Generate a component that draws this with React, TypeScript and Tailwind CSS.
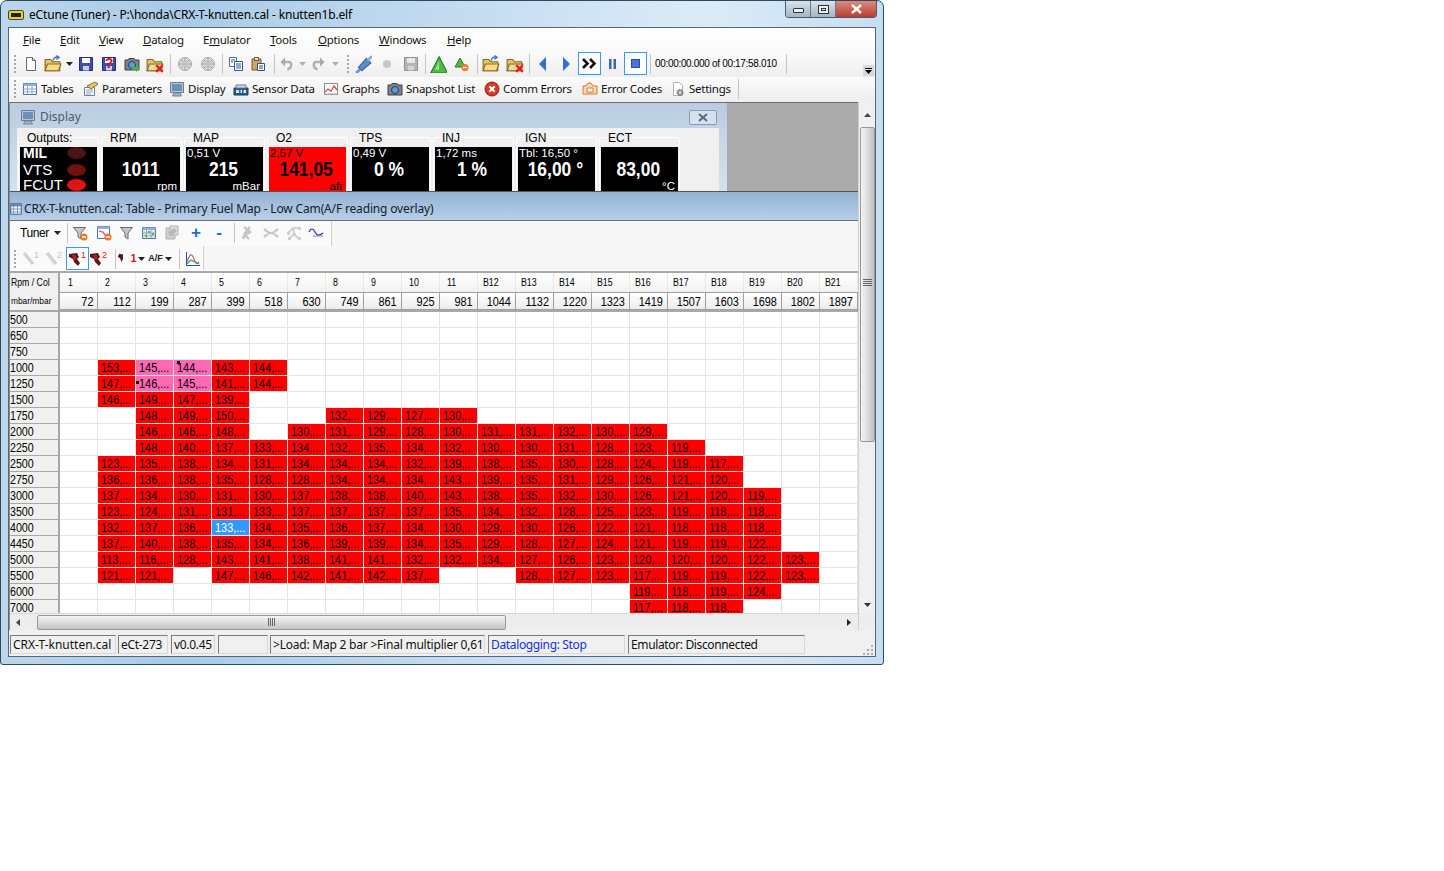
import type { ReactNode } from "react"

const ui = "font-['Noto_Sans',sans-serif]"
const ar = "font-['Liberation_Sans',Arial,sans-serif]"

// Icons are small hand drawn 16x16 svgs
function I({ children, s = 16 }: { children: ReactNode; s?: number }) {
  return (
    <svg width={s} height={s} viewBox="0 0 16 16" className="shrink-0">
      {children}
    </svg>
  )
}

const Doc = () => (
  <I>
    <path d="M3.500 1.500h6l3 3v10h-9z" fill="#fff" stroke="#5a6a8a" />
    <path d="M9.500 1.500v3h3" fill="#dfe6f2" stroke="#5a6a8a" />
  </I>
)
const Folder = ({ x }: { x?: boolean }) => (
  <I s={18}>
    <path d="M1 4h5l1.500 2H14v8H1z" fill="#e6c56a" stroke="#8a6a20" />
    <path d="M3 8h12l-2 6H1z" fill={x ? "#e8d9a0" : "#f7dc86"} stroke="#8a6a20" />
    {x ? (
      <path d="M9 9l6 6M15 9l-6 6" stroke="#e3231b" strokeWidth="2" />
    ) : (
      <path d="M8 5c1-3 3-3.500 5-3M11 .5l2.500 1.500L11 4" fill="none" stroke="#3d78c8" strokeWidth="1.200" />
    )}
  </I>
)
const Floppy = ({ gray, q }: { gray?: boolean; q?: boolean }) => (
  <I>
    <path d="M1.500 1.500h13v13h-13z" fill={gray ? "#b5b5b5" : "#3f4fa6"} stroke={gray ? "#909090" : "#26307a"} />
    <path d="M4 2h8v5H4z" fill={gray ? "#e8e8e8" : "#fff"} />
    <path d="M5 10h6v4.500H5z" fill={gray ? "#d5d5d5" : "#c9cde8"} />
    {q && (
      <text x="8" y="12" textAnchor="middle" fontSize="14" fontWeight="700" fill="#e01010" fontFamily="Liberation Sans">
        ?
      </text>
    )}
  </I>
)
const Camera = ({ go }: { go?: boolean }) => (
  <I>
    <path d="M1 4h3l1-1.500h5L11 4h4v10H1z" fill="#7d8288" stroke="#3c4046" />
    <circle cx="8" cy="9" r="3.500" fill="#5b9bd8" stroke="#2a3a50" />
    {go && <path d="M8 11h4V9l4 3.500L12 16v-2H8z" fill="#52b043" />}
  </I>
)
const Chip = () => (
  <I>
    <circle cx="8" cy="8" r="6.500" fill="#d8d8d8" stroke="#a8a8a8" />
    <path d="M8 2v12M2 8h12M4 4l8 8M12 4l-8 8" stroke="#a0a0a0" />
    <circle cx="8" cy="8" r="2.500" fill="#c4c4c4" />
  </I>
)
const Copy = () => (
  <I>
    <path d="M1.500 1.500h7v9h-7z" fill="#fff" stroke="#4a6fb0" />
    <path d="M6.500 5.500h8v9h-8z" fill="#fff" stroke="#2f56a0" />
    <path d="M8 8h5M8 10h5M8 12h5M3 4h4M3 6h2" stroke="#2f56a0" />
  </I>
)
const Paste = () => (
  <I>
    <path d="M2 3h9v11H2z" fill="#c8a868" stroke="#6e5a30" />
    <path d="M4.500 1.500h4v3h-4z" fill="#ece0b8" stroke="#6e5a30" />
    <path d="M7.500 7.500h7v7h-7z" fill="#fff" stroke="#33508a" />
    <path d="M9 10h4M9 12h4" stroke="#33508a" />
  </I>
)
const Curl = ({ flip }: { flip?: boolean }) => (
  <I>
    <g transform={flip ? "matrix(-1 0 0 1 16 0)" : undefined}>
      <path d="M4 6h6c3 0 3.500 6-1.500 7.500" fill="none" stroke="#b0b0b0" strokeWidth="2.400" />
      <path d="M6 1.500v9L1.500 6z" fill="#a8a8a8" />
    </g>
  </I>
)
const Plug = () => (
  <I s={18}>
    <path d="M2 16l3-3" stroke="#6c93cf" strokeWidth="2.500" />
    <path d="M4 11l7-8 4 4-8 7z" fill="#5b8bd0" stroke="#3b62a4" />
    <path d="M12 5l4-4" stroke="#8fa8cf" strokeWidth="2.500" />
  </I>
)
const Tri = ({ minus }: { minus?: boolean }) =>
  minus ? (
    <I>
      <path d="M6 2l5 9H1z" fill="#4db848" stroke="#2a7a2a" />
      <circle cx="11" cy="11.500" r="3.500" fill="#e8772a" />
      <path d="M9 11.500h4" stroke="#fff" strokeWidth="1.400" />
    </I>
  ) : (
    <I s={18}>
      <path d="M9 1.500L16.500 16h-15z" fill="#52b848" stroke="#2a7a2a" />
      <path d="M9 5l-3.500 8H9z" fill="#9fe090" />
    </I>
  )
const Caret = ({ c = "#222" }: { c?: string }) => (
  <svg width="7" height="4" viewBox="0 0 7 4" className="shrink-0">
    <path d="M0 0h7L3.500 4z" fill={c} />
  </svg>
)
const Grid = ({ dots }: { dots?: boolean }) => (
  <I>
    <path d="M1.500 2.500h13v11h-13z" fill={dots ? "#e8f0d0" : "#fff"} stroke="#4a72b0" />
    <path d="M1.500 2.500h13v2.500h-13z" fill="#8db0e0" />
    <path d="M5.500 5v8.500M10 5v8.500M1.500 8h13M1.500 10.800h13" stroke="#8aa6d0" />
    {dots && <path d="M7 6h2v2H7zM11 8h2v2h-2zM4 10h2v2H4z" fill="#58b858" />}
  </I>
)
const Params = () => (
  <I>
    <path d="M1.500 6.500h10v8h-10z" fill="#fff" stroke="#6a7fa0" />
    <path d="M3 9h7M3 11h7M3 13h5" stroke="#8aa0c0" />
    <path d="M4 5l8-4 3 2-7 5z" fill="#e8c868" stroke="#8a7030" />
  </I>
)
const Monitor = () => (
  <I>
    <path d="M1.500 1.500h13v10h-13z" fill="#b8c6d8" stroke="#6a7a90" />
    <path d="M3 3h10v7H3z" fill="#6d8fb8" />
    <path d="M5 12h6l1.500 3h-9z" fill="#a8b2c0" stroke="#7a8696" />
  </I>
)
const Sensor = () => (
  <I>
    <path d="M1 7h14v7H1z" fill="#2c5c8c" stroke="#173a60" />
    <path d="M3 4h10v3H3z" fill="#cfdcea" stroke="#6a7a90" />
    <path d="M3 9h3v3H3zM7.500 9H9v3H7.500zM10.500 9H13v3h-2.500z" fill="#cfe8f0" />
  </I>
)
const Chart = () => (
  <I>
    <path d="M1.500 2.500h13v11h-13z" fill="#fff" stroke="#8a8a8a" />
    <path d="M2 11l3-3 3 2 3-5 3 4" fill="none" stroke="#e04a3a" strokeWidth="1.300" />
    <path d="M2 13h12" stroke="#b0b0b0" />
  </I>
)
const ErrX = () => (
  <I>
    <circle cx="8" cy="8" r="7" fill="#d63a22" stroke="#9a2414" />
    <path d="M5.300 5.300l5.400 5.400M10.700 5.300l-5.400 5.400" stroke="#fff" strokeWidth="2" />
  </I>
)
const Codes = () => (
  <I>
    <path d="M1 5h3l2-3h3l2 3h4v8H1z" fill="#f6d8b8" stroke="#d87a2a" />
    <path d="M5 7h6v4H5z" fill="#fff" stroke="#d87a2a" />
  </I>
)
const Settings = () => (
  <I>
    <path d="M3.500 1.500h6l3 3v10h-9z" fill="#fff" stroke="#a8b0b8" />
    <circle cx="10" cy="11.500" r="3" fill="#9a9a9a" stroke="#6a6a6a" strokeDasharray="1.500 1" />
    <circle cx="10" cy="11.500" r="1" fill="#fff" />
  </I>
)
const Funnel = ({ minus }: { minus?: boolean }) => (
  <I>
    <path d="M1.500 2.500h12l-4.500 5.500v6l-3-2v-4z" fill="#c8c8c8" stroke="#6a6a6a" />
    {minus && <circle cx="12" cy="12" r="3.500" fill="#e8772a" />}
    {minus && <path d="M10 12h4" stroke="#fff" strokeWidth="1.400" />}
  </I>
)
const TableMinus = () => (
  <I>
    <path d="M1.500 1.500h12v12h-12z" fill="#fff" stroke="#4a72b0" />
    <path d="M1.500 1.500h12V4h-12z" fill="#8db0e0" />
    <path d="M3 6l4 1 3 4" fill="none" stroke="#e8559a" strokeWidth="1.400" />
    <circle cx="12" cy="12" r="3.500" fill="#e8772a" />
    <path d="M10 12h4" stroke="#fff" strokeWidth="1.400" />
  </I>
)
const GrayDoc = () => (
  <I>
    <path d="M2 3h9v11H2z" fill="#d0d0d0" stroke="#b0b0b0" />
    <path d="M6 1h8v9H6z" fill="#dcdcdc" stroke="#b4b4b4" />
    <path d="M4 8l6-5 3 3-6 5z" fill="#b8b8b8" />
  </I>
)
const Nodes = ({ v }: { v: number }) => (
  <I>
    {v === 0 && <path d="M5 2l6 5-5 3 4 4M11 2L6 8l-2 6" stroke="#c4c4c4" strokeWidth="2.400" fill="none" />}
    {v === 1 && <path d="M1 4l5 4-5 4M15 4l-5 4 5 4M5 8h6" stroke="#c8c8c8" strokeWidth="2.400" fill="none" />}
    {v === 2 && <path d="M2 8l5-5 6 0M7 3l1 6 5 5M8 9l-5 5" stroke="#c8c8c8" strokeWidth="1.600" fill="none" />}
    {v === 2 && <path d="M6 2h3v3H6zM1 7h3v3H1zM7 8h3v3H7zM12 2h3v3h-3zM12 12h3v3h-3zM2 12h3v3H2z" fill="#cfcfcf" />}
  </I>
)
const Wave = () => (
  <I>
    <path d="M1 7c2-4 4-4 6 0s4 4 8 1" fill="none" stroke="#2030c0" strokeWidth="1.200" />
    <path d="M5 11h10" stroke="#888" />
  </I>
)
const Injector = ({ gray, n }: { gray?: boolean; n?: string }) => (
  <svg width="20" height="18" viewBox="0 0 20 18" className="shrink-0">
    {gray ? (
      <path d="M3 3l9 11" stroke="#d2d2d2" strokeWidth="3.500" />
    ) : (
      <>
        <path d="M1 4l8-1 2 4-2 2 3 4-2 3-4-4-1-3-4-2z" fill="#5a1818" />
        <path d="M4 5l4 0 0 4-2 1z" fill="#a82828" />
      </>
    )}
    {n && (
      <text x="13" y="8" fontSize="9" fill={gray ? "#c4c4c4" : "#e81010"} fontFamily="Liberation Sans">
        {n}
      </text>
    )}
  </svg>
)
const Grip = () => (
  <div className="flex flex-col gap-[2px] w-[2px] shrink-0">
    {[0, 1, 2, 3, 4].map((i) => (
      <div key={i} className="w-[2px] h-[2px] bg-[#a8a8a8]" />
    ))}
  </div>
)
const Sep = ({ w }: { w: number }) => (
  <div className="flex justify-center shrink-0" style={{ width: w }}>
    <div className="w-px h-[20px] bg-[#c4c4c4]" />
  </div>
)
function B({ w, boxed, children }: { w: number; boxed?: boolean; children?: ReactNode }) {
  return (
    <div
      className={`flex items-center justify-center shrink-0 h-[23px] ${boxed ? "border border-[#3399ff] bg-white" : ""}`}
      style={{ width: w }}
    >
      {children}
    </div>
  )
}

function MainToolbar() {
  return (
    <div className="flex items-center shrink-0 h-[25px] pl-[5px] pb-[2px] bg-linear-to-b from-[#fbfbfb] to-[#eeeeee]">
      <div className="w-[5px]"><Grip /></div>
      <B w={23}><Doc /></B>
      <B w={22}><Folder /></B>
      <B w={10}><Caret /></B>
      <B w={23}><Floppy /></B>
      <B w={23}><Floppy q /></B>
      <B w={23}><Camera go /></B>
      <B w={23}><Folder x /></B>
      <Sep w={8} />
      <B w={22}><Chip /></B>
      <B w={23}><Chip /></B>
      <Sep w={6} />
      <B w={21}><Copy /></B>
      <B w={24}><Paste /></B>
      <Sep w={8} />
      <B w={17}><Curl /></B>
      <B w={15}><Caret c="#b0b0b0" /></B>
      <B w={16}><Curl flip /></B>
      <B w={18}><Caret c="#b0b0b0" /></B>
      <div className="flex justify-center w-[8px]"><Grip /></div>
      <B w={22}><Plug /></B>
      <B w={25}><div className="w-[8px] h-[8px] rounded-full bg-[#c8c8c8]" /></B>
      <B w={23}><Floppy gray /></B>
      <Sep w={6} />
      <B w={20}><Tri /></B>
      <B w={28}><Tri minus /></B>
      <Sep w={2} />
      <B w={26}><Folder /></B>
      <B w={22}><Folder x /></B>
      <Sep w={6} />
      <B w={22}>
        <svg width="8" height="14" viewBox="0 0 8 14"><path d="M7 0v14L0 7z" fill="#2f6fd8" /></svg>
      </B>
      <B w={24}>
        <svg width="8" height="14" viewBox="0 0 8 14"><path d="M1 0v14l7-7z" fill="#2f6fd8" /></svg>
      </B>
      <B w={23} boxed>
        <svg width="15" height="11" viewBox="0 0 15 11">
          <path d="M1 1l4.500 4.500L1 10M8 1l4.500 4.500L8 10" fill="none" stroke="#111" strokeWidth="2.600" />
        </svg>
      </B>
      <B w={23}>
        <svg width="7" height="10" viewBox="0 0 7 10"><path d="M0 0h2.500v10H0zM4.500 0H7v10H4.500z" fill="#3a62c8" /></svg>
      </B>
      <B w={23} boxed>
        <div className="w-[9px] h-[9px] bg-[#4a72d8] border border-[#2a4aa0]" />
      </B>
      <Sep w={6} />
      <div className={`${ar} w-[130px] shrink-0 pl-[2px] text-[10px] tracking-[-0.32px] text-black`}>00:00:00.000 of 00:17:58.010</div>
      <Sep w={6} />
      <div className="flex-1" />
      <div className="self-end flex flex-col items-center gap-[1px] w-[11px] h-[11px] mr-[1px] -mb-[1px] bg-[#d8d8d8] pt-[3px]">
        <div className="w-[7px] h-px bg-black" />
        <Caret c="#000" />
      </div>
    </div>
  )
}

const navItems: [ReactNode, string, number][] = [
  [<Grid />, "Tables", 61],
  [<Params />, "Parameters", 86],
  [<Monitor />, "Display", 64],
  [<Sensor />, "Sensor Data", 90],
  [<Chart />, "Graphs", 64],
  [<Camera />, "Snapshot List", 97],
  [<ErrX />, "Comm Errors", 98],
  [<Codes />, "Error Codes", 88],
  [<Settings />, "Settings", 70],
]

function NavToolbar() {
  return (
    <div className={`${ui} flex items-center shrink-0 h-[25px] pl-[5px] pb-[2px] bg-linear-to-b from-[#fbfbfb] to-[#eeeeee]`}>
      <div className="w-[6px]"><Grip /></div>
      {navItems.map(([icon, label, w]) => (
        <div key={label} className="flex items-center shrink-0 gap-[3px] pl-[2px]" style={{ width: w }}>
          {icon}
          <span className="text-[11.500px] tracking-[-0.25px] leading-none text-[#111] whitespace-nowrap">{label}</span>
        </div>
      ))}
      <div className="w-px h-[20px] bg-[#c4c4c4]" />
    </div>
  )
}

function Gauge({ label, top, value, unit, red }: { label: string; top?: string; value: string; unit?: string; red?: boolean }) {
  return (
    <Group label={label}>
      <div className={`${ar} h-[50px] flex flex-col ${red ? "bg-[#ff0000] text-black" : "bg-black text-white"}`}>
        <div className="h-[11px] text-[11.500px] leading-[13px] pl-px whitespace-nowrap">{top}</div>
        <div className="h-[22px] text-center pr-[2px] text-[21px] leading-[22px] font-bold">
          <span className="inline-block scale-x-[0.83]">{value}</span>
        </div>
        <div className="h-[12px] text-right text-[11.500px] leading-[12px] pr-[3px]">{unit}</div>
      </div>
    </Group>
  )
}

function Group({ label, children }: { label: string; children: ReactNode }) {
  return (
    <div className="relative w-[81px] h-[64px] mr-[2px] shrink-0 mt-[9px] border border-white rounded-t-[3px] pt-[9px] px-px">
      <span className={`${ar} absolute left-[7px] -top-[7px] bg-[#f0f0f0] px-px text-[12px] leading-[14px] text-black`}>{label}</span>
      {children}
    </div>
  )
}

const Led = ({ c }: { c: string }) => (
  <svg width="19" height="12" viewBox="0 0 19 12" className="shrink-0">
    <ellipse cx="9.500" cy="6" rx="9.500" ry="6" fill={c} />
  </svg>
)

function DisplayPanel() {
  return (
    <div className="flex shrink-0 h-[89px] border-t border-[#6e6e6e] overflow-hidden">
      <div className="w-[717px] bg-linear-to-b from-[#b9cde0] to-[#d4e3f2] shrink-0">
        <div className="h-[25px] flex items-center pt-[3px] pl-[10px] pr-[10px]">
          <Monitor />
          <span className={`${ui} ml-[4px] text-[12px] text-[#4a5a68]`}>Display</span>
          <div className="ml-auto w-[28px] h-[15px] border border-[#8a9ab0] rounded-[2px] bg-[#d6e1ee] flex items-center justify-center">
            <svg width="12" height="9" viewBox="0 0 12 9">
              <path d="M2 1l8 7M10 1L2 8" stroke="#5a6a7a" strokeWidth="2" />
            </svg>
          </div>
        </div>
        <div className="ml-[7px] w-[702px] h-[64px] bg-[#f0f0f0] flex pl-px overflow-hidden">
          <Group label="Outputs:">
            <div className={`${ar} h-[50px] bg-black text-white pl-[3px] font-bold text-[14px]`}>
              <div className="flex items-center justify-between h-[12px] pr-[11px]">MIL<Led c="#4a1414" /></div>
              <div className="flex items-center justify-between h-[16px] mt-[3px] font-normal text-[15px] pr-[11px]">VTS<Led c="#701010" /></div>
              <div className="flex items-center justify-between h-[12px] mt-px font-normal text-[15px] pr-[11px]">FCUT<Led c="#e01414" /></div>
            </div>
          </Group>
          <Gauge label="RPM" value="1011" unit="rpm" />
          <Gauge label="MAP" top="0,51 V" value="215" unit="mBar" />
          <Gauge label="O2" top="2,57 V" value="141,05" unit="afr" red />
          <Gauge label="TPS" top="0,49 V" value="0 %" />
          <Gauge label="INJ" top="1,72 ms" value="1 %" />
          <Gauge label="IGN" top="Tbl: 16,50 °" value="16,00 °" />
          <Gauge label="ECT" value="83,00" unit="°C" />
        </div>
      </div>
      <div className="flex-1 bg-[#ababab]" />
    </div>
  )
}

function TableToolbars() {
  return (
    <div className="h-[50px] shrink-0 bg-[#f6f6f6] border-t border-[#6e6e6e]">
      <div className="flex items-center h-[25px] pb-[2px] w-[322px] bg-[#fafafa] border-r border-[#d0d0d0]">
        <div className="w-[10px] shrink-0" />
        <span className={`${ar} text-[12px] tracking-[-0.4px] w-[34px] shrink-0 text-black`}>Tuner</span>
        <Caret />
        <div className="w-[5px] shrink-0" />
        <Sep w={2} />
        <B w={24}><Funnel minus /></B>
        <B w={24}><TableMinus /></B>
        <B w={22}><Funnel /></B>
        <B w={22}><Grid dots /></B>
        <B w={24}><GrayDoc /></B>
        <B w={24}><span className={`${ar} text-[17px] leading-none font-bold text-[#1a6ad8]`}>+</span></B>
        <B w={22}><span className={`${ar} text-[17px] leading-none font-bold text-[#1a6ad8]`}>-</span></B>
        <Sep w={8} />
        <B w={18}><Nodes v={0} /></B>
        <B w={30}><Nodes v={1} /></B>
        <B w={16}><Nodes v={2} /></B>
        <B w={28}><Wave /></B>
      </div>
      <div className="flex items-center h-[25px] w-[194px] bg-[#fafafa] border-r border-[#d0d0d0]">
        <div className="w-[6px] ml-[4px] shrink-0"><Grip /></div>
        <B w={22}><Injector gray n="1" /></B>
        <B w={24}><Injector gray n="2" /></B>
        <B w={23} boxed><Injector n="1" /></B>
        <B w={20}><Injector n="2" /></B>
        <Sep w={12} />
        <B w={20}>
          <div className="flex items-center gap-[1px]">
            <I s={12}><path d="M3 1l5 1v6l-2 4-2-5-3-2z" fill="#5a1818" /></I>
            <span className={`${ar} text-[11px] font-bold text-[#e81010] leading-none`}>1</span>
            <Caret />
          </div>
        </B>
        <B w={35}>
          <div className="flex items-center gap-[2px] pl-[3px]">
            <span className={`${ar} text-[9px] font-bold text-[#222] leading-none`}>A/F</span>
            <Caret />
          </div>
        </B>
        <Sep w={6} />
        <B w={22}><ChartLines /></B>
      </div>
    </div>
  )
}

const ChartLines = () => (
  <I>
    <path d="M1.500 1v13.500H15" fill="none" stroke="#1c50c0" />
    <path d="M2 11c3-9 5-9 7-3s3 5 5 3" fill="none" stroke="#e04a7a" strokeWidth="1.200" />
    <path d="M2 13l4-4 4 2 4 2" fill="none" stroke="#40a840" strokeWidth="1.200" />
  </I>
)

const columns = ["1", "2", "3", "4", "5", "6", "7", "8", "9", "10", "11", "B12", "B13", "B14", "B15", "B16", "B17", "B18", "B19", "B20", "B21"]
const loads = [72, 112, 199, 287, 399, 518, 630, 749, 861, 925, 981, 1044, 1132, 1220, 1323, 1419, 1507, 1603, 1698, 1802, 1897]

// [rpm, first column (1 based), values], 0 = empty cell
const rows: [number, number, number[]][] = [
  [500, 1, []],
  [650, 1, []],
  [750, 1, []],
  [1000, 2, [153, 145, 144, 143, 144]],
  [1250, 2, [147, 146, 145, 141, 144]],
  [1500, 2, [146, 149, 147, 139]],
  [1750, 3, [148, 149, 150, 0, 0, 132, 129, 127, 130]],
  [2000, 3, [146, 146, 148, 0, 130, 131, 129, 128, 130, 131, 131, 132, 130, 129]],
  [2250, 3, [148, 140, 137, 133, 134, 132, 135, 134, 132, 130, 130, 131, 128, 123, 119]],
  [2500, 2, [123, 135, 138, 134, 131, 134, 134, 134, 132, 139, 138, 135, 130, 128, 124, 119, 117]],
  [2750, 2, [136, 136, 138, 135, 128, 128, 134, 134, 134, 143, 139, 135, 131, 129, 126, 121, 120]],
  [3000, 2, [137, 134, 130, 131, 130, 137, 138, 138, 140, 143, 138, 135, 132, 130, 126, 121, 120, 119]],
  [3500, 2, [123, 124, 131, 131, 133, 137, 137, 137, 137, 135, 134, 132, 128, 125, 123, 119, 118, 118]],
  [4000, 2, [132, 137, 136, 133, 134, 135, 136, 137, 134, 130, 129, 130, 126, 122, 121, 118, 118, 118]],
  [4450, 2, [137, 140, 138, 135, 134, 136, 139, 139, 134, 135, 129, 128, 127, 124, 121, 119, 119, 122]],
  [5000, 2, [113, 116, 128, 143, 141, 138, 141, 141, 132, 132, 134, 127, 126, 123, 120, 120, 120, 122, 123]],
  [5500, 2, [121, 121, 0, 147, 146, 142, 141, 142, 137, 0, 0, 128, 127, 123, 117, 119, 119, 122, 123]],
  [6000, 16, [119, 118, 119, 124]],
  [7000, 16, [117, 118, 118]],
]

function Cell({ rpm, col, v }: { rpm: number; col: number; v: number }) {
  const pink = (rpm === 1000 || rpm === 1250) && (col === 3 || col === 4)
  const blue = rpm === 4000 && col === 5
  const bg = !v ? "bg-white" : blue ? "bg-[#3399ff] text-white" : pink ? "bg-[#ff69b4] text-black" : "bg-[#ff0000] text-black"
  return (
    <div className={`relative h-[16px] border-r border-b border-[#e4e4e4] pl-[3px] overflow-hidden whitespace-nowrap text-[13px] leading-[15px] ${bg}`}>
      {v ? <span className="inline-block origin-left scale-x-[0.84]">{`${v},...`}</span> : ""}
      {rpm === 1000 && col === 4 && <div className="absolute left-[3px] top-px w-[3px] h-[3px] bg-black" />}
      {rpm === 1250 && col === 3 && <div className="absolute left-0 top-[5px] w-[3px] h-[3px] bg-black" />}
    </div>
  )
}

function FuelGrid() {
  return (
    <div className={`${ar} h-[343px] shrink-0 overflow-hidden bg-white`}>
      <div className="flex h-[2px] mt-px bg-[#a8a8a8]" />
      <div className="flex h-[19px]">
        <div className="w-[50px] shrink-0 pl-px text-[10px] leading-[19px] bg-[#f0f0f0] border-r-2 border-[#a8a8a8] text-black whitespace-nowrap">
          <span className="inline-block origin-left scale-x-[0.87]">Rpm / Col</span>
        </div>
        {columns.map((c, i) => (
          <div
            key={c}
            className={`w-[38px] shrink-0 text-[10px] leading-[19px] border-r border-[#e8e8e8] bg-linear-to-b from-white to-[#f2f2f2] text-black ${c[0] === "B" ? "pl-[5px]" : i === 0 ? "pl-[8px]" : "pl-[7px]"}`}
          >
            <span className="inline-block origin-left scale-x-[0.88]">{c}</span>
          </div>
        ))}
      </div>
      <div className="flex h-[20px] border-b-2 border-[#a8a8a8]">
        <div className="w-[50px] shrink-0 pl-px text-[9.500px] leading-[18px] bg-[#f0f0f0] border-r-2 border-[#a8a8a8] text-black whitespace-nowrap">
          <span className="inline-block origin-left scale-x-[0.88]">mbar/mbar</span>
        </div>
        {loads.map((l) => (
          <div
            key={l}
            className="w-[38px] shrink-0 text-right pr-[4px] text-[13px] leading-[17px] border border-l-0 border-[#a0a0a0] bg-linear-to-b from-white to-[#ececec] text-black"
          >
            <span className="inline-block origin-right scale-x-[0.84]">{l}</span>
          </div>
        ))}
      </div>
      {rows.map(([rpm, start, vals]) => (
        <div key={rpm} className="flex h-[16px]">
          <div className="w-[50px] shrink-0 text-[13px] leading-[15px] bg-[#f0f0f0] border-b border-b-[#a8a8a8] border-r-2 border-r-[#a8a8a8] text-black">
            <span className="inline-block origin-left scale-x-[0.82]">{rpm}</span>
          </div>
          {columns.map((c, i) => (
            <div key={c} className="w-[38px] shrink-0">
              <Cell rpm={rpm} col={i + 1} v={vals[i + 1 - start] ?? 0} />
            </div>
          ))}
        </div>
      ))}
    </div>
  )
}

const Thumb = ({ vertical }: { vertical?: boolean }) => (
  <div className={`flex ${vertical ? "flex-col gap-px" : "gap-px"} items-center justify-center`}>
    {[0, 1, 2, 3].map((i) => (
      <div key={i} className={vertical ? "w-[9px] h-px bg-[#666]" : "w-px h-[8px] bg-[#666]"} />
    ))}
  </div>
)

function HScroll() {
  return (
    <div className="h-[17px] shrink-0 flex items-center bg-[#ededed] border-t border-[#d8d8d8]">
      <div className="w-[27px] h-full flex items-center pl-[6px] shrink-0">
        <svg width="4" height="7" viewBox="0 0 4 7"><path d="M4 0v7L0 3.500z" fill="#444" /></svg>
      </div>
      <div className="w-[469px] h-[15px] border border-[#999] rounded-[2px] bg-linear-to-b from-[#f4f4f4] via-[#dcdcdc] to-[#c4c4c4] flex items-center justify-center shrink-0">
        <Thumb />
      </div>
      <div className="flex-1" />
      <div className="w-[18px] h-full flex items-center justify-center shrink-0">
        <svg width="4" height="7" viewBox="0 0 4 7"><path d="M0 0v7l4-3.500z" fill="#222" /></svg>
      </div>
    </div>
  )
}

function VScroll() {
  return (
    <div className="w-[17px] shrink-0 h-[528px] flex flex-col border-l border-[#d0d0d0] bg-[#f0f0f0]">
      <div className="h-[511px] flex flex-col items-center">
        <div className="h-[25px] flex items-center justify-center">
          <svg width="7" height="4" viewBox="0 0 7 4"><path d="M0 4h7L3.500 0z" fill="#444" /></svg>
        </div>
        <div className="w-[15px] h-[315px] border border-[#999] rounded-[2px] bg-linear-to-r from-[#f4f4f4] via-[#dcdcdc] to-[#c0c0c0] flex items-start justify-center pt-[151px]">
          <Thumb vertical />
        </div>
        <div className="flex-1 w-full flex items-end justify-center pb-[6px]">
          <svg width="7" height="4" viewBox="0 0 7 4"><path d="M0 0h7L3.500 4z" fill="#333" /></svg>
        </div>
      </div>
      <div className="flex-1 bg-[#ededed]" />
    </div>
  )
}

function Panel({ className, children }: { className: string; children?: ReactNode }) {
  return (
    <div
      className={`h-[19px] shrink-0 border border-t-[#7a7a7a] border-l-[#7a7a7a] border-r-[#d8d8d8] border-b-[#d8d8d8] pl-[2px] text-[12px] leading-[17px] whitespace-nowrap overflow-hidden ${className}`}
    >
      {children}
    </div>
  )
}

const menu: [string, string, string, number][] = [
  ["", "F", "ile", 37],
  ["", "E", "dit", 39],
  ["", "V", "iew", 44],
  ["", "D", "atalog", 60],
  ["E", "m", "ulator", 67],
  ["", "T", "ools", 48],
  ["", "O", "ptions", 61],
  ["", "W", "indows", 68],
  ["", "H", "elp", 40],
]

function StatusBar() {
  return (
    <div className={`${ui} h-[26px] shrink-0 flex pt-[5px] pl-px relative bg-[#f0f0f0] text-[#111]`}>
      <Panel className="w-[106px] mr-[2px]">CRX-T-knutten.cal</Panel>
      <Panel className="w-[50px] mr-[3px] tracking-[-0.3px]">eCt-273</Panel>
      <Panel className="w-[44px] mr-[3px] tracking-[-0.3px]">v0.0.45</Panel>
      <Panel className="w-[50px] mr-[2px]" />
      <Panel className="w-[215px] mr-[3px] tracking-[-0.22px]">&gt;Load: Map 2 bar &gt;Final multiplier 0,61</Panel>
      <Panel className="w-[137px] mr-[3px] tracking-[-0.35px] text-[#1030e8]">Datalogging: Stop</Panel>
      <Panel className="w-[177px] tracking-[-0.36px]">Emulator: Disconnected</Panel>
      <svg width="12" height="12" viewBox="0 0 12 12" className="absolute right-[1px] bottom-[1px]">
        <path d="M9 2h2v2H9zM5 6h2v2H5zM9 6h2v2H9zM1 10h2v2H1zM5 10h2v2H5zM9 10h2v2H9z" fill="#a8a8a8" />
      </svg>
    </div>
  )
}

export default function App() {
  return (
    <div className="w-[1444px] h-[871px] bg-white overflow-hidden">
      <div className="w-[884px] h-[665px] flex flex-col border border-[#2c4a5c] rounded-t-[7px] rounded-b-[3px] bg-[linear-gradient(90deg,#bcd6ec,#a9cbe8_20%,#c2dbf0_50%,#dcebf7_80%,#c6def2)]">
        <div className="h-[26px] shrink-0 flex items-start pl-[7px]">
          <div className="mt-[9px] w-[16px] h-[10px] bg-[#f0d020] border border-[#444] rounded-[2px] flex items-center justify-center">
            <div className="w-[10px] h-[4px] bg-[#222]" />
          </div>
          <span className={`${ui} ml-[5px] mt-[6px] text-[12px] leading-[16px] tracking-[-0.17px] text-black whitespace-nowrap`}>
            eCtune (Tuner) - P:\honda\CRX-T-knutten.cal - knutten1b.elf
          </span>
          <div className="ml-auto mr-[6px] flex h-[17px] border border-t-0 border-[#4a5a6a] rounded-b-[4px] overflow-hidden">
            <div className="w-[25px] flex items-center justify-center border-r border-[#6a7a8a] bg-linear-to-b from-[#d8e4ee] to-[#a4b4c4]">
              <div className="w-[11px] h-[5px] mt-[3px] border border-[#333] bg-[#e8eef4] rounded-[1px]" />
            </div>
            <div className="w-[25px] flex items-center justify-center border-r border-[#6a7a8a] bg-linear-to-b from-[#d8e4ee] to-[#a4b4c4]">
              <div className="w-[11px] h-[9px] border border-[#333] flex items-center justify-center bg-[#e8eef4]">
                <div className="w-[5px] h-[3px] border border-[#333]" />
              </div>
            </div>
            <div className="w-[40px] flex items-center justify-center bg-linear-to-b from-[#d88a80] to-[#b83a30]">
              <svg width="13" height="10" viewBox="0 0 13 10">
                <path d="M2 1l9 8M11 1L2 9" stroke="#fff" strokeWidth="2.400" />
              </svg>
            </div>
          </div>
        </div>
        <div className="mx-[7px] h-[630px] shrink-0 flex flex-col border border-[#55687a] bg-[#f0f0f0]">
          <div className={`${ui} h-[24px] shrink-0 flex items-center pl-[14px] bg-linear-to-b from-white to-[#fafafa] text-[11.500px] tracking-[-0.25px] text-[#111]`}>
            {menu.map(([a, u, b, w]) => (
              <span key={u} className="shrink-0 whitespace-nowrap" style={{ width: w }}>
                {a}<span className="underline">{u}</span>{b}
              </span>
            ))}
          </div>
          <MainToolbar />
          <NavToolbar />
          <div className="flex h-[528px] shrink-0">
            <div className="w-[849px] shrink-0 flex flex-col border-l border-[#8c8c8c]">
              <DisplayPanel />
              <div className={`${ui} h-[29px] shrink-0 flex items-center pt-[6px] gap-[2px] border-t border-[#555] bg-linear-to-b from-[#93b2d4] to-[#b8d0e9] text-[12px] tracking-[-0.16px] text-[#14202c]`}>
                <I s={12}>
                  <path d="M1 1h14v14H1z" fill="#fff" stroke="#3a5a90" strokeWidth="1.300" />
                  <path d="M1 1h14v3H1zM5 4v11M10 4v11M1 8h14M1 12h14" fill="#6a8cc8" stroke="#5a7ab0" />
                </I>
                CRX-T-knutten.cal: Table - Primary Fuel Map - Low Cam(A/F reading overlay)
              </div>
              <TableToolbars />
              <FuelGrid />
              <HScroll />
            </div>
            <VScroll />
          </div>
          <StatusBar />
        </div>
      </div>
    </div>
  )
}
